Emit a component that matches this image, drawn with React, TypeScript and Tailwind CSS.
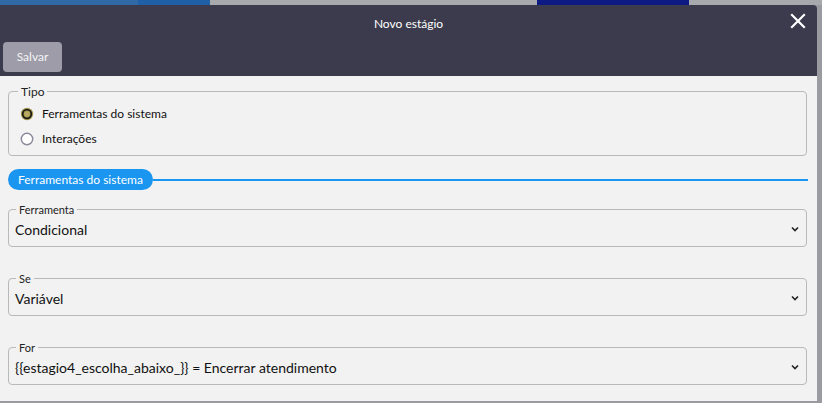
import React from 'react';

const Chevron = () => (
  <svg width="10" height="10" viewBox="0 0 10 10" className="shrink-0">
    <path d="M2 3.5 L5 6.5 L8 3.5" fill="none" stroke="#222" strokeWidth="1.6" />
  </svg>
);

function SelectField({ label, value }: { label: string; value: string }) {
  return (
    <fieldset className="border border-[#b9b9b9] rounded-[4px] px-[6px] pb-[6px] pt-0 min-w-0">
      <legend className="px-[3px] ml-[1px] text-[11px] leading-[13px] text-[#222]">{label}</legend>
      <div className="flex items-center justify-between h-[22px] mt-[2px]">
        <span className="text-[14px] text-[#111]">{value}</span>
        <Chevron />
      </div>
    </fieldset>
  );
}

export default function App() {
  return (
    <div className="w-[822px] h-[403px] bg-[#9a9ba0] overflow-hidden flex flex-col" style={{ fontFamily: 'Lato, "Noto Sans", sans-serif' }}>
      {/* page behind the modal */}
      <div className="h-[5px] flex shrink-0">
        <div className="w-[138px] bg-[#2f6aa6]" />
        <div className="w-[72px] bg-[#1f5fa6]" />
        <div className="w-[327px] bg-[#a8a9ad]" />
        <div className="w-[152px] bg-[#0d1a84]" />
        <div className="flex-1 bg-[#a8a9ad]" />
      </div>

      <div className="w-[817px] h-[396px] shrink-0 flex flex-col rounded-tr-[4px] overflow-hidden">
        {/* header */}
        <div className="h-[71px] bg-[#3b3b4d] shrink-0 relative">
          <div className="text-center text-white text-[12px] pt-[11px] leading-[15px]">Novo estágio</div>
          <button className="absolute right-[11px] top-[8px] text-white">
            <svg width="16" height="16" viewBox="0 0 16 16">
              <path d="M2 2 L14 14 M14 2 L2 14" stroke="white" strokeWidth="2.2" strokeLinecap="square" />
            </svg>
          </button>
          <button className="absolute left-[3px] top-[37px] w-[59px] h-[30px] rounded-[4px] bg-[#9d9ca8] text-[#f4f4f4] text-[12px]">
            Salvar
          </button>
        </div>

        {/* body */}
        <div className="flex-1 bg-[#f2f2f2] pl-[8px] pr-[10px] pt-[8px]">
          <fieldset className="border border-[#b9b9b9] rounded-[4px] px-[10px] pb-[6px] pt-0 h-[72px]">
            <legend className="px-[3px] ml-[-1px] text-[12px] leading-[15px] text-[#222]">Tipo</legend>
            <div className="flex items-center gap-[8px] h-[25px] mt-[2px] ml-[1px]">
              <svg width="14" height="14" viewBox="0 0 14 14">
                <circle cx="7" cy="7" r="6.2" fill="#a99a52" />
                <circle cx="7" cy="7" r="4.3" fill="none" stroke="#1c1c14" strokeWidth="1.8" />
                <circle cx="7" cy="7" r="2.6" fill="#b8aa5e" />
              </svg>
              <span className="text-[12px] text-[#111]">Ferramentas do sistema</span>
            </div>
            <div className="flex items-center gap-[8px] h-[25px] ml-[1px]">
              <svg width="14" height="14" viewBox="0 0 14 14">
                <circle cx="7" cy="7" r="5.7" fill="#fff" stroke="#8b8a9b" strokeWidth="1.5" />
              </svg>
              <span className="text-[12px] text-[#111]">Interações</span>
            </div>
          </fieldset>

          <div className="flex items-center mt-[13px] mr-[-1px]">
            <span className="bg-[#1a96f1] text-white text-[12px] leading-[21px] h-[21px] px-[10px] rounded-full shrink-0">
              Ferramentas do sistema
            </span>
            <div className="flex-1 h-[2px] bg-[#1a96f1]" />
          </div>

          <div className="flex flex-col gap-[25px] mt-[13px]">
            <SelectField label="Ferramenta" value="Condicional" />
            <SelectField label="Se" value="Variável" />
            <SelectField label="For" value="{{estagio4_escolha_abaixo_}} = Encerrar atendimento" />
          </div>
        </div>
      </div>
    </div>
  );
}
